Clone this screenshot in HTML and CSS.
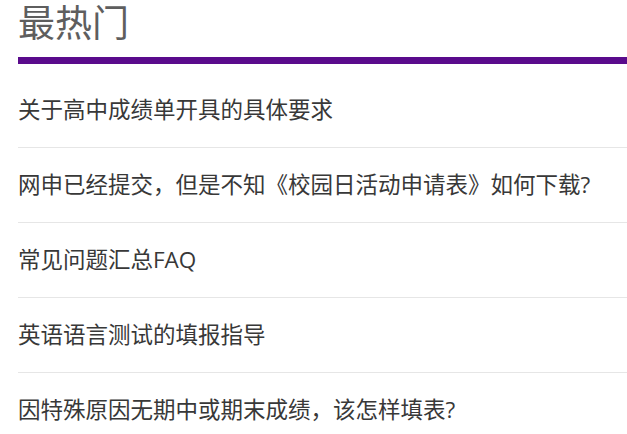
FILE: index.html
```html
<!DOCTYPE html>
<html lang="zh-CN">
<head>
<meta charset="utf-8">
<title>最热门</title>
<link rel="stylesheet" href="styles.css">
</head>
<body>
<section class="hot">
  <h2 class="hot-title">最热门</h2>
  <div class="hot-bar"></div>
  <ul class="hot-list">
    <li class="hot-item">关于高中成绩单开具的具体要求</li>
    <li class="hot-item">网申已经提交，但是不知《校园日活动申请表》如何下载?</li>
    <li class="hot-item">常见问题汇总FAQ</li>
    <li class="hot-item">英语语言测试的填报指导</li>
    <li class="hot-item">因特殊原因无期中或期末成绩，该怎样填表?</li>
  </ul>
</section>
</body>
</html>
```

FILE: styles.css
```css
html, body {
  margin: 0;
  padding: 0;
  background: #ffffff;
}
body {
  font-family: "Open Sans", "Noto Sans CJK SC", sans-serif;
  overflow: hidden;
}
.hot {
  margin-left: 18px;
}
.hot-title {
  margin: 0;
  padding: 0 0 12px 0;
  font-size: 37px;
  font-weight: 400;
  line-height: 45px;
  color: #5e5e5e;
}
.hot-bar {
  height: 7px;
  background: #5a0b8c;
}
.hot-list {
  list-style: none;
  margin: 9px 0 0 0;
  padding: 0;
}
.hot-item {
  height: 74px;
  line-height: 74px;
  font-size: 22.5px;
  color: #383838;
  border-bottom: 1px solid #e6e6e6;
  white-space: nowrap;
}
```
